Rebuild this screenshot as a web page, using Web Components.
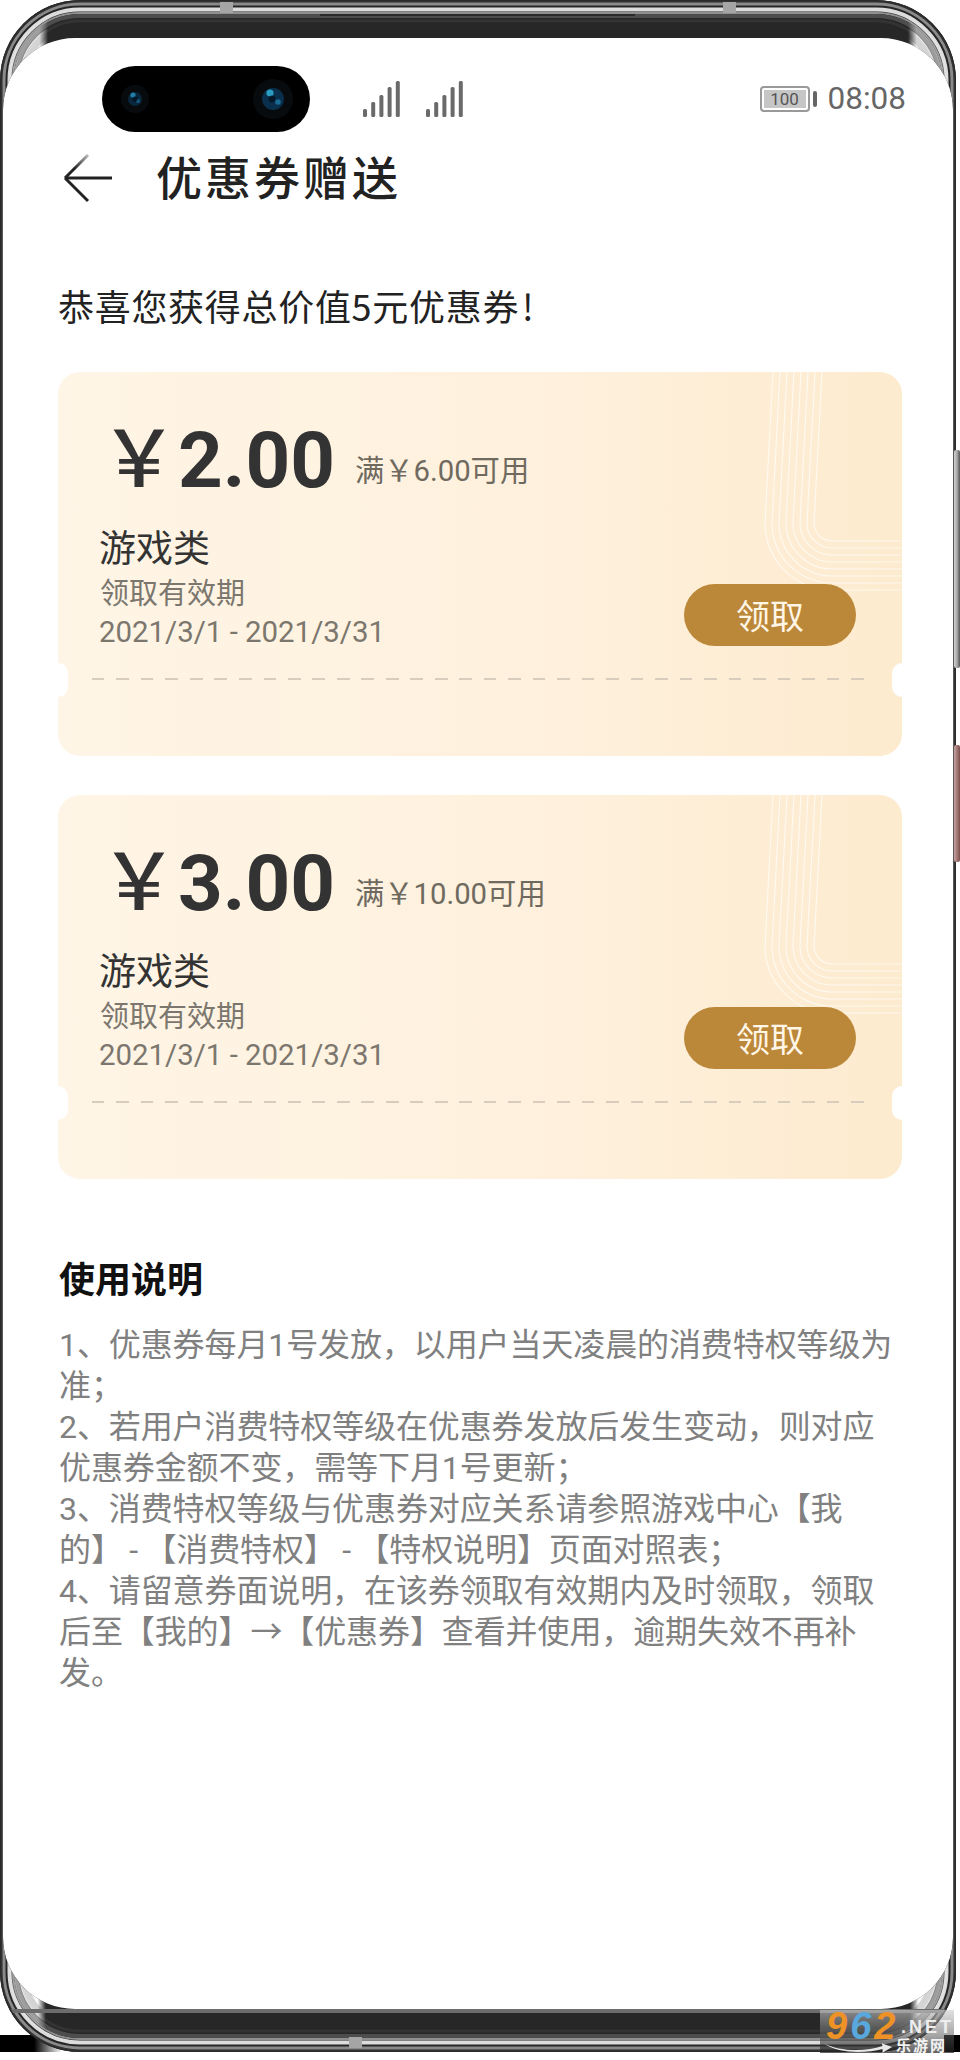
<!DOCTYPE html>
<html lang="zh">
<head>
<meta charset="utf-8">
<title>优惠券赠送</title>
<style>
  html, body { margin: 0; background: #fff; }
  body { font-family: Roboto, "Noto Sans CJK SC", sans-serif; }
</style>
</head>
<body>
<phone-frame>
  <status-bar></status-bar>
  <app-header>优惠券赠送</app-header>
  <page-lead>恭喜您获得总价值5元优惠券&#8202;!</page-lead>
  <coupon-card amount="2.00" limit="满￥6.00可用">游戏类</coupon-card>
  <coupon-card amount="3.00" limit="满￥10.00可用">游戏类</coupon-card>
  <usage-notes>
    <span slot="title">使用说明</span>
    <p>1、优惠券每月1号发放，以用户当天凌晨的消费特权等级为准；</p>
    <p>2、若用户消费特权等级在优惠券发放后发生变动，则对应优惠券金额不变，需等下月1号更新；</p>
    <p>3、消费特权等级与优惠券对应关系请参照游戏中心【我的】&#8201;-&#8201;【消费特权】&#8201;-&#8201;【特权说明】页面对照表；</p>
    <p>4、请留意券面说明，在该券领取有效期内及时领取，领取后至【我的】→【优惠券】查看并使用，逾期失效不再补发。</p>
  </usage-notes>
  <site-badge></site-badge>
</phone-frame>

<script>
// outer body of the phone and the screen cut out of it
const OUTER = {x: 0, y: 0, w: 956, h: 2052, r: 80};
const SCREEN = {x: 3, y: 38, w: 950, h: 1971, r: 72};

function rrect(b){
    return `M${b.x + b.r} ${b.y}H${b.x + b.w - b.r}A${b.r} ${b.r} 0 0 1 ${b.x + b.w} ${b.y + b.r}` +
        `V${b.y + b.h - b.r}A${b.r} ${b.r} 0 0 1 ${b.x + b.w - b.r} ${b.y + b.h}` +
        `H${b.x + b.r}A${b.r} ${b.r} 0 0 1 ${b.x} ${b.y + b.h - b.r}` +
        `V${b.y + b.r}A${b.r} ${b.r} 0 0 1 ${b.x + b.r} ${b.y}Z`;
}

function band(d, w, color, op = 1){
    return `<rect x="${d}" y="${d}" width="${OUTER.w - 2 * d}" height="${OUTER.h - 2 * d}" rx="${OUTER.r - d}" fill="none" stroke="${color}" stroke-width="${w}" stroke-opacity="${op}"/>`;
}

class PhoneFrame extends HTMLElement{
    constructor(){
        super();
        this.attachShadow({mode:'open'});
        this.shadowRoot.innerHTML = `
        <style>
            :host{
                display:block;
                position:relative;
                width:960px;
                height:2060px;
                overflow:hidden;
                background:#fff;
                color:#1a1a1a;
            }
            svg{
                position:absolute;
                top:0;
                left:0;
                pointer-events:none;
            }
        </style>
        <slot></slot>
        <svg width="960" height="2060" viewBox="0 0 960 2060">
            <defs>
                <clipPath id="bezel"><path clip-rule="evenodd" d="${rrect(OUTER)}${rrect(SCREEN)}"/></clipPath>
                <linearGradient id="maskL" x1="0" x2="1" y1="0" y2="0">
                    <stop offset=".82" stop-color="#fff"/>
                    <stop offset="1" stop-color="#000"/>
                </linearGradient>
                <linearGradient id="maskR" x1="1" x2="0" y1="0" y2="0">
                    <stop offset=".82" stop-color="#fff"/>
                    <stop offset="1" stop-color="#000"/>
                </linearGradient>
                <mask id="corners" maskUnits="userSpaceOnUse" x="0" y="0" width="960" height="2060">
                    <rect x="0" y="0" width="48" height="120" fill="url(#maskL)"/>
                    <rect x="908" y="0" width="48" height="120" fill="url(#maskR)"/>
                    <rect x="0" y="1932" width="46" height="120" fill="url(#maskL)"/>
                    <rect x="910" y="1932" width="46" height="120" fill="url(#maskR)"/>
                </mask>
                <linearGradient id="fadeL" x1="0" x2="1" y1="0" y2="0">
                    <stop offset=".55" stop-color="#000"/>
                    <stop offset="1" stop-color="#000" stop-opacity="0"/>
                </linearGradient>
                <linearGradient id="key" x1="0" x2="1" y1="0" y2="0">
                    <stop offset="0" stop-color="#d0d0d0"/>
                    <stop offset=".5" stop-color="#aaa"/>
                    <stop offset="1" stop-color="#555"/>
                </linearGradient>
                <linearGradient id="keyRed" x1="0" x2="1" y1="0" y2="0">
                    <stop offset="0" stop-color="#c9a3a1"/>
                    <stop offset="1" stop-color="#7d4f4e"/>
                </linearGradient>
            </defs>
            <rect x="0" y="2035" width="62" height="17" fill="url(#fadeL)"/>
            <rect x="944" y="2035" width="16" height="17" fill="#000"/>
            <g clip-path="url(#bezel)">
                <rect width="960" height="2060" fill="#272727"/>
                ${band(1, 2, '#3c3c3c')}
                ${band(4, 3, '#8a8a8a')}
                ${band(9.5, 4, '#dcdcdc')}
                ${band(13, 2, '#8f8f8f')}
                ${band(16, 4, '#4d4d4d')}
                ${band(21, 3, '#333')}
                <g mask="url(#corners)">
                    ${band(12, 6, '#fff', .15)}
                    ${band(17, 6, '#fff', .45)}
                    ${band(24, 10, '#fff', .8)}
                    ${band(34, 14, '#fff', .95)}
                </g>
                <rect x="0" y="2009" width="960" height="4" fill="#6c6c6c"/>
                <rect x="320" y="14" width="315" height="2" fill="#2a2a2a"/>
                <rect x="220" y="2" width="13" height="11" fill="#a5a5a5"/>
                <rect x="723" y="2" width="13" height="11" fill="#a5a5a5"/>
                <rect x="349" y="2037" width="13" height="11" fill="#a5a5a5"/>
                ${band(.75, 1.5, '#2a2a2a')}
            </g>
            <rect x="954" y="450" width="6" height="218" rx="2" fill="url(#key)"/>
            <rect x="954" y="745" width="6" height="117" rx="2" fill="url(#keyRed)"/>
        </svg>
        `;
    }
}
customElements.define('phone-frame', PhoneFrame);

class StatusBar extends HTMLElement{
    constructor(){
        super();
        this.attachShadow({mode:'open'});
        const bars = [8, 15, 22, 30, 36].map((h, i) =>
            `<rect x="${i * 8.2}" y="${36 - h}" width="4" height="${h}" rx="1.5"/>`).join('');
        const signal = `<svg width="38" height="36" viewBox="0 0 38 36" fill="#6a6a6a">${bars}</svg>`;
        this.shadowRoot.innerHTML = `
        <style>
            :host{
                display:flex;
                align-items:center;
                box-sizing:border-box;
                height:66px;
                margin-top:66px;
                padding:0 54px 0 102px;
                color:#666;
            }
            .cam{
                display:flex;
                align-items:center;
                justify-content:space-between;
                box-sizing:border-box;
                width:208px;
                height:66px;
                padding:0 16px 0 18px;
                border-radius:33px;
                background:#000;
            }
            .signals{
                display:flex;
                gap:25px;
                margin-left:53px;
                margin-top:-1px;
            }
            .right{
                display:flex;
                align-items:center;
                margin-left:auto;
            }
            .battery{
                box-sizing:border-box;
                display:flex;
                align-items:center;
                justify-content:center;
                width:50px;
                height:26px;
                border:2px solid #999;
                border-radius:4px;
                padding:2px;
            }
            .battery span{
                flex:1;
                align-self:stretch;
                background:#c6c6c6;
                font:17px/18px Roboto, sans-serif;
                color:#555;
                text-align:center;
            }
            .tip{
                width:4px;
                height:16px;
                margin-left:3px;
                border-radius:2px;
                background:#666;
            }
            .time{
                margin-left:11px;
                font:31.5px/40px Roboto, sans-serif;
            }
        </style>
        <div class="cam">
            <svg width="30" height="30" viewBox="0 0 30 30">
                <circle cx="15" cy="15" r="14" fill="#080b0e"/>
                <circle cx="15" cy="15" r="7" fill="#08263c"/>
                <circle cx="13" cy="11" r="2.6" fill="#1f7fa6"/>
                <circle cx="18" cy="17" r="2" fill="#175a80"/>
                <circle cx="15" cy="15" r="2.6" fill="#04101c" opacity=".7"/>
            </svg>
            <svg width="42" height="42" viewBox="0 0 42 42">
                <circle cx="21" cy="21" r="20" fill="#080b0e"/>
                <circle cx="21" cy="21" r="11" fill="#0a2f4c"/>
                <circle cx="18" cy="15" r="3.6" fill="#2a9cc0"/>
                <circle cx="26" cy="24" r="2.8" fill="#186a94"/>
                <circle cx="20" cy="21" r="3.4" fill="#04101c" opacity=".75"/>
            </svg>
        </div>
        <div class="signals">${signal}${signal}</div>
        <div class="right">
            <div class="battery"><span>100</span></div>
            <div class="tip"></div>
            <div class="time">08:08</div>
        </div>
        `;
    }
}
customElements.define('status-bar', StatusBar);

class AppHeader extends HTMLElement{
    constructor(){
        super();
        this.attachShadow({mode:'open'});
        this.shadowRoot.innerHTML = `
        <style>
            :host{
                display:flex;
                align-items:center;
                height:52px;
                margin-top:20px;
                padding-left:63px;
                gap:43px;
            }
            svg{ flex:none; }
            h1{
                margin:0 0 6px;
                font:500 46px/52px "Noto Sans CJK SC", sans-serif;
                letter-spacing:3px;
                color:#222;
            }
        </style>
        <svg width="50" height="50" viewBox="0 0 50 50" fill="none">
            <defs>
                <linearGradient id="fade" x1="0" x2="1" y1="1" y2="0">
                    <stop offset=".4" stop-color="#222"/>
                    <stop offset="1" stop-color="#bbb"/>
                </linearGradient>
            </defs>
            <path d="M2 25H49" stroke="#222" stroke-width="3"/>
            <path d="M2 25L25 48" stroke="#222" stroke-width="3"/>
            <path d="M2 25L25 2" stroke="url(#fade)" stroke-width="3"/>
        </svg>
        <h1><slot></slot></h1>
        `;
    }
}
customElements.define('app-header', AppHeader);

class PageLead extends HTMLElement{
    constructor(){
        super();
        this.attachShadow({mode:'open'});
        this.shadowRoot.innerHTML = `
        <style>
            :host{
                display:block;
                margin:76px 0 42px 58px;
                font:400 36px/50px "Noto Sans CJK SC", sans-serif;
                letter-spacing:.7px;
                color:#222;
            }
        </style>
        <slot></slot>
        `;
    }
}
customElements.define('page-lead', PageLead);

class CouponCard extends HTMLElement{
    constructor(){
        super();
        this.attachShadow({mode:'open'});
        const amount = this.getAttribute('amount');
        const limit = this.getAttribute('limit');
        // the eight thin lines in the top right corner
        let lines = '';
        for(let i = 0; i < 8; i++){
            const r = 18 + i * 7;
            lines += `<path d="M${764 - i * 7} 0L${756 - i * 7} 151A${r} ${r} 0 0 0 ${774} ${151 + r}H844"/>`;
        }
        this.shadowRoot.innerHTML = `
        <style>
            :host{
                display:block;
                position:relative;
                box-sizing:border-box;
                width:844px;
                height:384px;
                margin:0 0 39px 58px;
                border-radius:22px;
                overflow:hidden;
                background:linear-gradient(90deg,#fff5e6 0%,#fef0dc 60%,#fdebcf 100%);
            }
            svg{
                position:absolute;
                top:0;
                left:0;
            }
            .body{
                position:relative;
                display:grid;
                grid-template-columns:1fr auto;
                align-items:end;
                padding:33px 46px 0 42px;
            }
            .price{
                grid-column:1 / 3;
                display:flex;
                align-items:baseline;
                height:96px;
                color:#333;
            }
            .yen{
                font:500 78px/96px "Noto Sans CJK SC", sans-serif;
            }
            .num{
                font:700 78px/96px Roboto, sans-serif;
            }
            .limit{
                align-self:flex-end;
                margin:0 0 10px 20px;
                font:400 29.3px/40px Roboto, "Noto Sans CJK SC", sans-serif;
                color:#6f6a60;
            }
            .name{
                margin-left:-1px;
                font:400 37px/44px "Noto Sans CJK SC", sans-serif;
                color:#333;
            }
            .label{
                font:400 29px/46px "Noto Sans CJK SC", sans-serif;
                color:#7c776e;
            }
            .date{
                margin-left:-1px;
                font:400 29.4px/36px Roboto, sans-serif;
                color:#7c776e;
            }
            .info{
                margin-top:23px;
            }
            button{
                width:172px;
                height:62px;
                margin-bottom:4px;
                border:0;
                border-radius:31px;
                background:#bb8739;
                color:#fff6e6;
                font:400 34px/62px "Noto Sans CJK SC", sans-serif;
                padding:0;
            }
            .dash{
                position:relative;
                height:2px;
                margin:28px 38px 0 34px;
                background:repeating-linear-gradient(90deg,#d8cdbd 0 12.5px,transparent 12.5px 24.5px);
            }
            .notch{
                position:absolute;
                top:291px;
                width:10px;
                height:34px;
                background:#fff;
            }
            .notch.l{ left:0; border-radius:0 10px 10px 0; }
            .notch.r{ right:0; border-radius:10px 0 0 10px; }
        </style>
        <svg width="844" height="384" viewBox="0 0 844 384" fill="none" stroke="#fff" stroke-opacity=".65" stroke-width="1.2">${lines}</svg>
        <div class="body">
            <div class="price">
                <span class="yen">￥</span><span class="num">${amount}</span><span class="limit">${limit}</span>
            </div>
            <div class="info">
                <div class="name"><slot></slot></div>
                <div class="label">领取有效期</div>
                <div class="date">2021/3/1 - 2021/3/31</div>
            </div>
            <button>领取</button>
        </div>
        <div class="dash"></div>
        <div class="notch l"></div>
        <div class="notch r"></div>
        `;
    }
}
customElements.define('coupon-card', CouponCard);

class UsageNotes extends HTMLElement{
    constructor(){
        super();
        this.attachShadow({mode:'open'});
        this.shadowRoot.innerHTML = `
        <style>
            :host{
                display:block;
                width:840px;
                margin:73px 0 0 59px;
            }
            h2{
                margin:0 0 23px;
                font:700 36px/50px "Noto Sans CJK SC", sans-serif;
                color:#111;
            }
            .list{
                font:400 32px/41px Roboto, "Noto Sans CJK SC", sans-serif;
                letter-spacing:-.1px;
                color:#808080;
            }
            ::slotted(p){
                margin:0;
            }
        </style>
        <h2><slot name="title"></slot></h2>
        <div class="list"><slot></slot></div>
        `;
    }
}
customElements.define('usage-notes', UsageNotes);

class SiteBadge extends HTMLElement{
    constructor(){
        super();
        this.attachShadow({mode:'open'});
        this.shadowRoot.innerHTML = `
        <style>
            :host{
                position:absolute;
                z-index:1;
                left:820px;
                top:2010px;
                width:134px;
                height:43px;
                display:flex;
                background:linear-gradient(180deg,rgba(205,205,205,.6),rgba(90,90,90,.55) 60%,rgba(30,30,30,.7));
            }
            .num{
                width:76px;
                margin-left:6px;
                font:italic 700 38px/32px "Liberation Sans", sans-serif;
                letter-spacing:3px;
                color:#ef9226;
            }
            .num b{ color:#58a7dd; font-weight:700; }
            .side{
                display:flex;
                flex-direction:column;
            }
            .net{
                margin:8px 0 0 1px;
                font:700 18px/18px "Liberation Sans", sans-serif;
                letter-spacing:3px;
                color:#eee;
            }
            .cn{
                margin:1px 0 0 -4px;
                font:700 15px/16px "Noto Sans CJK SC", sans-serif;
                letter-spacing:2px;
                color:#f2f2f2;
            }
            svg{
                position:absolute;
                left:4px;
                top:31px;
            }
        </style>
        <div class="num">9<b>6</b>2</div>
        <div class="side">
            <div class="net">.NET</div>
            <div class="cn">乐游网</div>
        </div>
        <svg width="68" height="12" viewBox="0 0 72 12" fill="#e8e8e8"><path d="M0 2C16 11 44 11 62 5L61 2L72 6L62 12L62 8C44 13 14 13 0 2Z"/></svg>
        `;
    }
}
customElements.define('site-badge', SiteBadge);
</script>
</body>
</html>
